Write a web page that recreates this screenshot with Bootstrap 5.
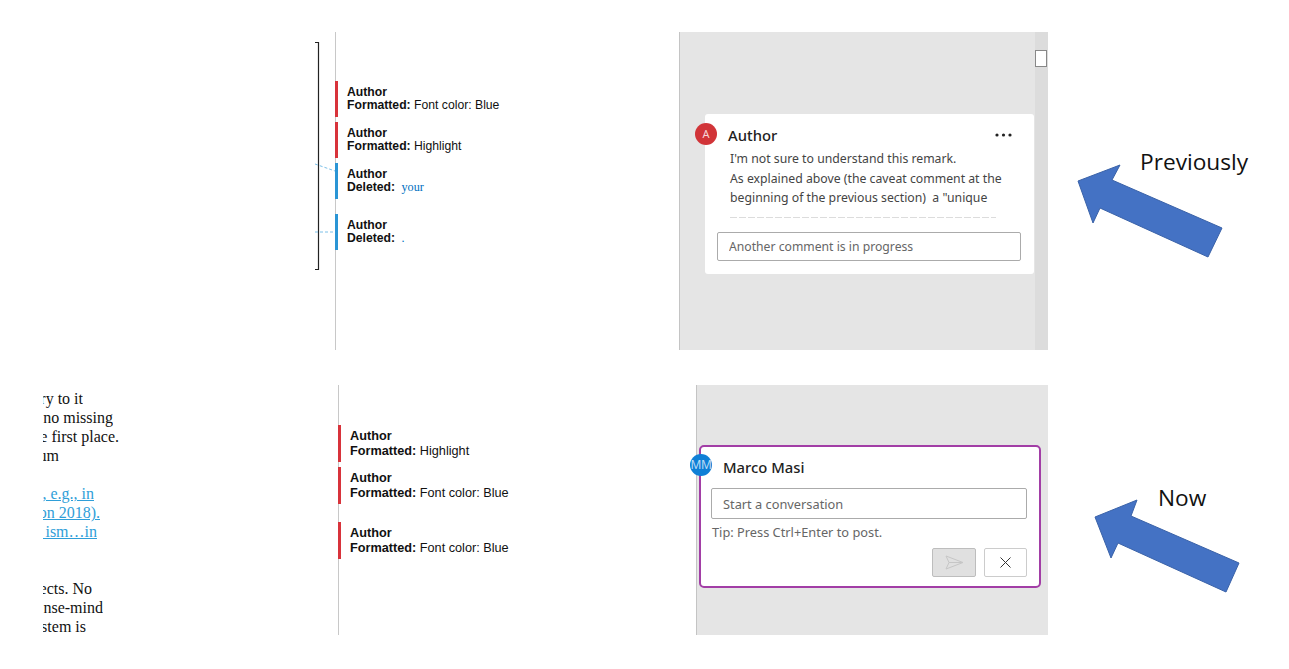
<!DOCTYPE html>
<html lang="en">
<head>
    <meta charset="UTF-8">
    <meta name="viewport" content="width=device-width, initial-scale=1.0">
    <title>Comments: previously and now</title>
    <link href="https://cdn.jsdelivr.net/npm/bootstrap@5.3.0/dist/css/bootstrap.min.css" rel="stylesheet">
    <style>
        body { background: #fff; margin: 0; height: 669px; overflow: hidden; font-family: "Noto Sans", sans-serif; }

        /* --- the two pasted screenshots --- */
        .shot-row { overflow: hidden; }
        .shot-prev { height: 318px; margin-top: 32px; }
        .shot-now { height: 250px; margin-top: 35px; }
        .page-prev { width: 335px; flex: none; }
        .page-now { width: 338px; flex: none; }
        .margin-prev { width: 344px; flex: none; border-left: 1px solid #c8c8c8; padding-top: 49px; }
        .margin-now { width: 358px; flex: none; border-left: 1px solid #c8c8c8; padding-top: 40px; }
        .pane-prev { width: 369px; flex: none; }
        .pane-now { width: 352px; flex: none; padding: 60px 0 0 2px; }
        .pane-prev, .pane-now { background: #e5e5e5; border-left: 1px solid #c4c4c4; }
        .side-art { width: 241px; flex: none; }
        .side-art svg, .page-prev svg { display: block; }
        .slide-label { font-family: "Open Sans", sans-serif; font-size: 22.7px; line-height: 30px; color: #111; }
        .label-prev { left: 92px; top: 115px; }
        .label-now { left: 110px; top: 98px; }

        /* --- body text clipped on the left --- */
        .page-clip { margin: 4px 0 0 43px; width: 100px; font-family: "Liberation Serif", serif; font-size: 16px; line-height: 19px; color: #111; }
        .clip-line { display: flex; justify-content: flex-end; overflow: hidden; white-space: nowrap; height: 19px; }
        .clip-line a { color: #2f9ed8; }
        .end-40 { width: 40px; } .end-43 { width: 43px; } .end-49 { width: 49px; } .end-51 { width: 51px; }
        .end-54 { width: 54px; } .end-57 { width: 57px; } .end-60 { width: 60px; } .end-70 { width: 70px; } .end-76 { width: 76px; } .end-16 { width: 16px; }

        /* --- tracked change balloons --- */
        .change { font-family: "Liberation Sans", sans-serif; color: #111; margin-left: -1px; border-left: 3px solid #d8333b; }
        .change-blue { border-left-color: #2a95d5; }
        .change-prev { font-size: 12.2px; line-height: 13px; padding: 5px 0 5px 9px; height: 36px; margin-bottom: 5px; }
        .change-now { font-size: 12.7px; line-height: 14.5px; padding: 4px 0 0 9px; height: 37px; margin-bottom: 5px; }
        .change-prev.gap-after { margin-bottom: 15px; }
        .change-now.gap-after { margin-bottom: 18px; }
        .deleted-word { font-family: "Liberation Serif", serif; color: #0070c0; margin-left: 3px; }

        /* --- comment cards --- */
        .comment-box { background: #fff; position: relative; color: #333; }
        .box-prev { width: 329px; height: 160px; margin: 82px 0 0 25px; padding: 11px 12px 12px; border-radius: 3px; }
        .box-now { width: 342px; padding: 10px 12px 9px 10px; border: 2px solid #a23ea6; border-radius: 5px; }
        .avatar { position: absolute; width: 22px; height: 22px; border-radius: 50%; color: #f6d5d6; font-size: 11px; line-height: 22px; text-align: center; }
        .avatar-red { background: #d13438; left: -10px; top: 9px; }
        .avatar-blue { background: #0f7fd6; color: #bcdcf5; font-size: 12px; left: -11px; top: 7px; letter-spacing: -.5px; }
        .who { font-size: 14.8px; font-weight: 500; line-height: 20px; color: #222; }
        .who-prev { margin: 0 10px 4px 11px; }
        .who-now { margin: 0 0 11px 12px; }
        .comment-text { font-size: 12.25px; line-height: 19.5px; margin-left: 13px; color: #444; white-space: pre; }
        .cut-line { height: 1px; width: 266px; margin: 9px 0 14px 13px; background: repeating-linear-gradient(90deg, #dcdcdc 0 7px, #fff 7px 9px); }
        .form-control.box-input { height: 29px; width: 304px; padding: 0 11px; font-size: 12.2px; border: 1px solid #ababab; border-radius: 2px; color: #666; background: #fff; }
        .box-input::placeholder { color: #666; opacity: 1; }
        .box-now .form-control.box-input { height: 31px; width: 316px; font-size: 12.8px; }
        .tip { font-size: 12.8px; line-height: 18px; color: #666; margin: 4px 0 7px 1px; }
        .btn.box-btn { height: 29px; padding: 0; border-radius: 2px; display: flex; align-items: center; justify-content: center; }
        .btn-send { width: 44px; background: #e0e0e0; border: 1px solid #bdbdbd; }
        .btn-cancel { width: 43px; background: #fff; border: 1px solid #ccc; }
        .actions { width: 316px; }

        /* --- scroll strip on the old pane --- */
        .scroll-strip { width: 13px; background: #dcdcdc; flex: none; padding-top: 18px; }
        .scroll-thumb { width: 12px; height: 17px; background: #fff; border: 1px solid #888; }
    </style>
</head>
<body>
    <!-- Previously -->
    <div class="d-flex shot-row shot-prev">
        <div class="page-prev">
            <svg width="335" height="318" viewBox="0 32 335 318">
                <path d="M315 42.5h3.5v227H315" fill="none" stroke="#222" stroke-width="1.2"/>
                <path d="M315 164l20 7M315 232h20" fill="none" stroke="#7cc0e8" stroke-width="1" stroke-dasharray="3 2"/>
            </svg>
        </div>
        <div class="margin-prev">
            <div class="change change-prev"><b>Author</b><br><b>Formatted:</b> Font color: Blue</div>
            <div class="change change-prev"><b>Author</b><br><b>Formatted:</b> Highlight</div>
            <div class="change change-prev change-blue gap-after"><b>Author</b><br><b>Deleted:</b> <span class="deleted-word">your</span></div>
            <div class="change change-prev change-blue"><b>Author</b><br><b>Deleted:</b> <span class="deleted-word">.</span></div>
        </div>
        <div class="pane-prev d-flex justify-content-between align-items-start">
            <div class="comment-box box-prev">
                <div class="avatar avatar-red">A</div>
                <div class="who who-prev d-flex justify-content-between align-items-center">
                    <span>Author</span>
                    <svg width="17" height="4" viewBox="0 0 17 4"><circle cx="2" cy="2" r="1.6" fill="#222"/><circle cx="8.5" cy="2" r="1.6" fill="#222"/><circle cx="15" cy="2" r="1.6" fill="#222"/></svg>
                </div>
                <div class="comment-text">I'm not sure to understand this remark.
As explained above (the caveat comment at the
beginning of the previous section)  a "unique</div>
                <div class="cut-line"></div>
                <input class="form-control box-input" type="text" placeholder="Another comment is in progress" readonly>
            </div>
            <div class="scroll-strip h-100"><div class="scroll-thumb"></div></div>
        </div>
        <div class="side-art position-relative">
            <svg width="241" height="318" viewBox="1048 32 241 318">
                <polygon points="1078,181 1120,165 1112,180 1222,228 1208,257 1100,208 1093,223" fill="#4472c4" stroke="#3a62a8" stroke-width="1"/>
            </svg>
            <div class="slide-label label-prev position-absolute">Previously</div>
        </div>
    </div>

    <!-- Now -->
    <div class="d-flex shot-row shot-now">
        <div class="page-now">
            <div class="page-clip">
                <div class="clip-line end-40"><span>try to it</span></div>
                <div class="clip-line end-70"><span>no missing</span></div>
                <div class="clip-line end-76"><span>the first place.</span></div>
                <div class="clip-line end-16"><span>um</span></div>
                <div class="clip-line"></div>
                <div class="clip-line end-51"><a href="#">g, e.g., in</a></div>
                <div class="clip-line end-57"><a href="#">on 2018).</a></div>
                <div class="clip-line end-54"><a href="#">&nbsp;&nbsp;ism…in</a></div>
                <div class="clip-line"></div>
                <div class="clip-line"></div>
                <div class="clip-line end-49"><span>ects. No</span></div>
                <div class="clip-line end-60"><span>nse-mind</span></div>
                <div class="clip-line end-43"><span>stem is</span></div>
            </div>
        </div>
        <div class="margin-now">
            <div class="change change-now"><b>Author</b><br><b>Formatted:</b> Highlight</div>
            <div class="change change-now gap-after"><b>Author</b><br><b>Formatted:</b> Font color: Blue</div>
            <div class="change change-now"><b>Author</b><br><b>Formatted:</b> Font color: Blue</div>
        </div>
        <div class="pane-now">
            <div class="comment-box box-now">
                <div class="avatar avatar-blue">MM</div>
                <div class="who who-now">Marco Masi</div>
                <input class="form-control box-input" type="text" placeholder="Start a conversation" readonly>
                <div class="tip">Tip: Press Ctrl+Enter to post.</div>
                <div class="actions d-flex justify-content-end gap-2">
                    <button class="btn box-btn btn-send" type="button" aria-label="Send">
                        <svg width="19" height="15" viewBox="0 0 19 15"><path d="M1 1l17 6.5L1 14l3-6.5zM4 7.5h14" fill="none" stroke="#c6c6c6" stroke-width="1"/></svg>
                    </button>
                    <button class="btn box-btn btn-cancel" type="button" aria-label="Cancel">
                        <svg width="11" height="11" viewBox="0 0 11 11"><path d="M.5.5l10 10M10.5.5l-10 10" fill="none" stroke="#333" stroke-width="1"/></svg>
                    </button>
                </div>
            </div>
        </div>
        <div class="side-art position-relative">
            <svg width="241" height="250" viewBox="1048 385 241 250">
                <polygon points="1095,517 1137,500 1131,516 1239,563 1226,592 1118,543 1111,558" fill="#4472c4" stroke="#3a62a8" stroke-width="1"/>
            </svg>
            <div class="slide-label label-now position-absolute">Now</div>
        </div>
    </div>

    <script src="https://cdn.jsdelivr.net/npm/bootstrap@5.3.0/dist/js/bootstrap.bundle.min.js"></script>
</body>
</html>
